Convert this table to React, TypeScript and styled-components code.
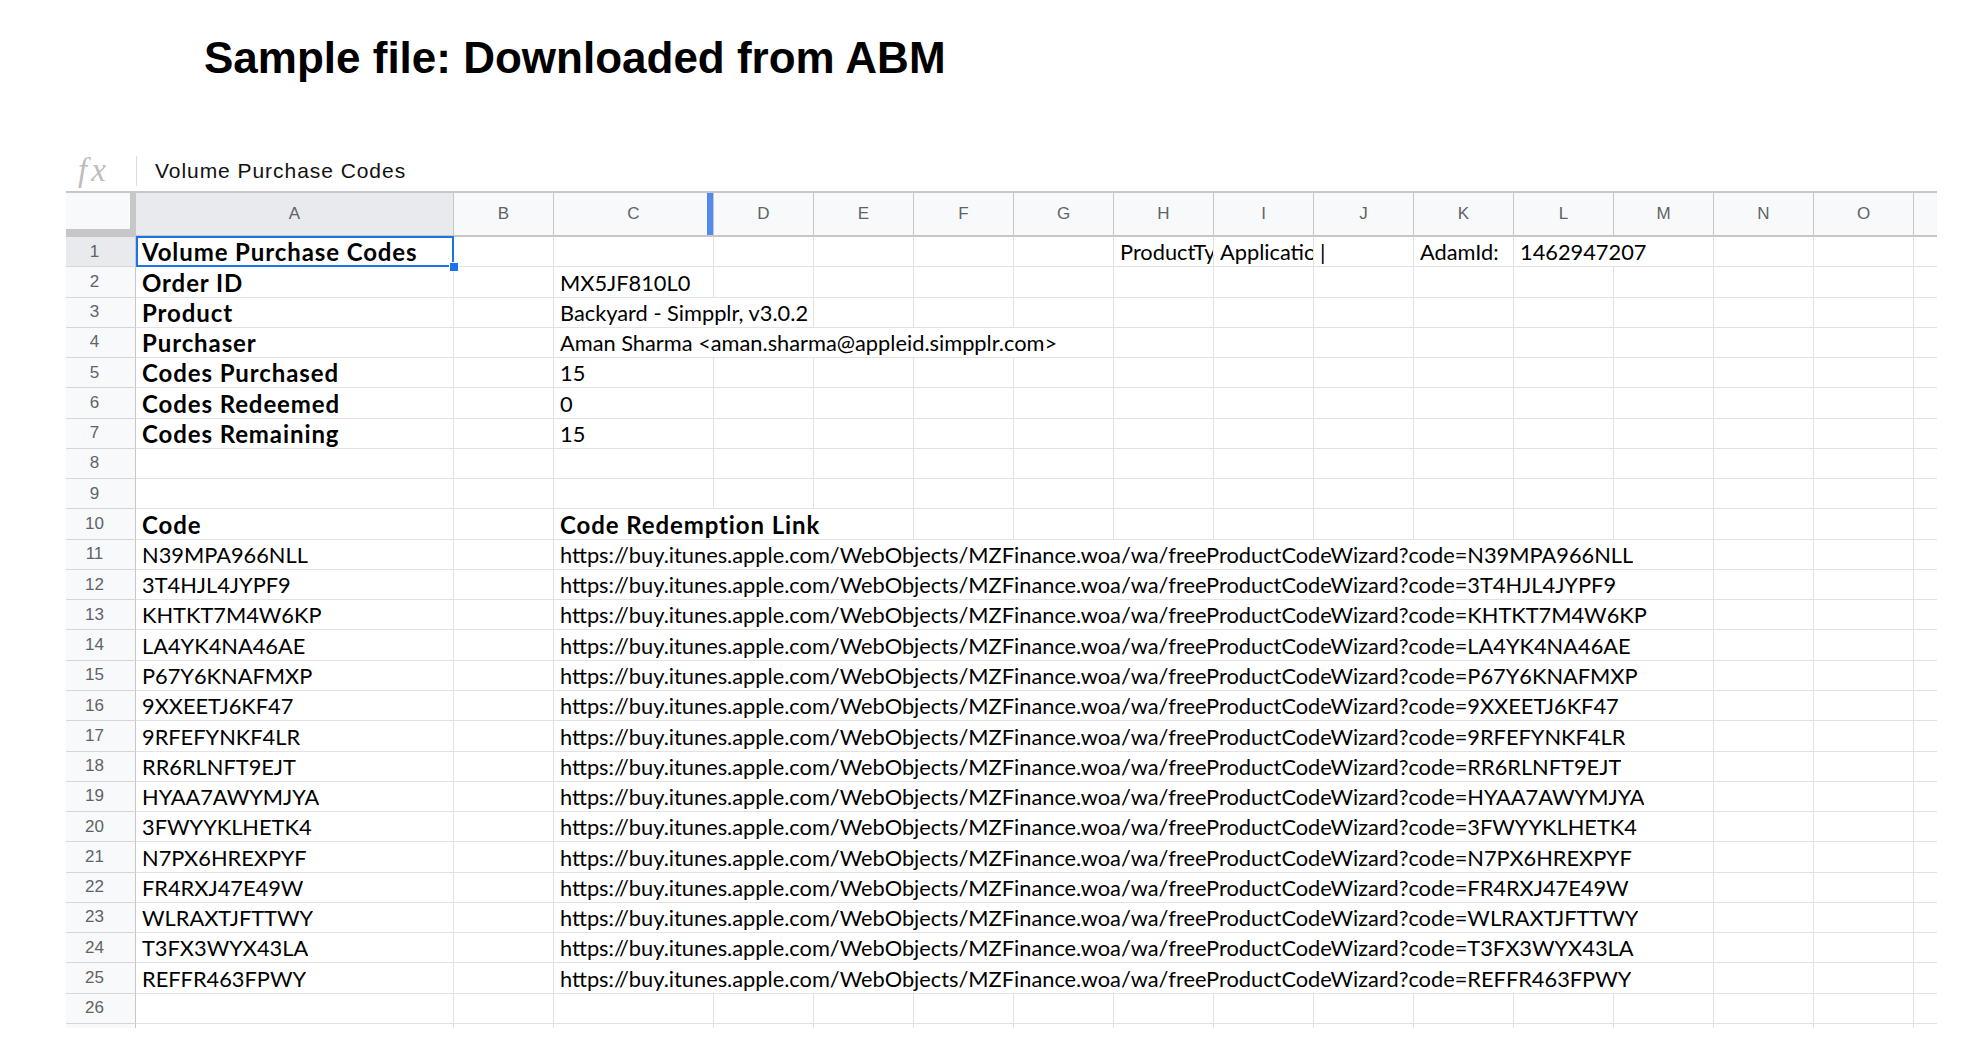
import React from 'react';
import styled, { createGlobalStyle, css } from 'styled-components';

const GlobalStyle = createGlobalStyle`
  *, *::before, *::after {
    box-sizing: border-box;
  }
  html, body {
    margin: 0;
    padding: 0;
    background: #fff;
  }
  body {
    font-family: 'Liberation Sans', Arial, sans-serif;
  }
`;

const COLUMNS = [
  { key: 'A', width: 318 },
  { key: 'B', width: 100 },
  { key: 'C', width: 160 },
  ...'DEFGHIJKLMNO'.split('').map((key) => ({ key, width: 100 })),
  { key: '', width: 24 },
];

const TEMPLATE = `70px ${COLUMNS.map((c) => `${c.width}px`).join(' ')}`;
const ROW_HEIGHT = 30.27;
const VISIBLE_ROWS = 26;
const URL = 'https://buy.itunes.apple.com/WebObjects/MZFinance.woa/wa/freeProductCodeWizard?code=';

const CODES = [
  'N39MPA966NLL',
  '3T4HJL4JYPF9',
  'KHTKT7M4W6KP',
  'LA4YK4NA46AE',
  'P67Y6KNAFMXP',
  '9XXEETJ6KF47',
  '9RFEFYNKF4LR',
  'RR6RLNFT9EJT',
  'HYAA7AWYMJYA',
  '3FWYYKLHETK4',
  'N7PX6HREXPYF',
  'FR4RXJ47E49W',
  'WLRAXTJFTTWY',
  'T3FX3WYX43LA',
  'REFFR463FPWY',
];

interface CellSpec {
  col: string;
  text: string;
  span?: number;
  bold?: boolean;
  active?: boolean;
}

const ROWS: CellSpec[][] = [
  [
    { col: 'A', text: 'Volume Purchase Codes', bold: true, active: true },
    { col: 'H', text: 'ProductType' },
    { col: 'I', text: 'Application' },
    { col: 'J', text: '|' },
    { col: 'K', text: 'AdamId:' },
    { col: 'L', text: '1462947207', span: 2 },
  ],
  [
    { col: 'A', text: 'Order ID', bold: true },
    { col: 'C', text: 'MX5JF810L0' },
  ],
  [
    { col: 'A', text: 'Product', bold: true },
    { col: 'C', text: 'Backyard - Simpplr, v3.0.2', span: 2 },
  ],
  [
    { col: 'A', text: 'Purchaser', bold: true },
    { col: 'C', text: 'Aman Sharma <aman.sharma@appleid.simpplr.com>', span: 5 },
  ],
  [
    { col: 'A', text: 'Codes Purchased', bold: true },
    { col: 'C', text: '15' },
  ],
  [
    { col: 'A', text: 'Codes Redeemed', bold: true },
    { col: 'C', text: '0' },
  ],
  [
    { col: 'A', text: 'Codes Remaining', bold: true },
    { col: 'C', text: '15' },
  ],
  [],
  [],
  [
    { col: 'A', text: 'Code', bold: true },
    { col: 'C', text: 'Code Redemption Link', bold: true, span: 3 },
  ],
  ...CODES.map((code) => [
    { col: 'A', text: code },
    { col: 'C', text: URL + code, span: 11 },
  ]),
  [],
  [],
];

const Page = styled.div`
  width: 1964px;
  height: 1050px;
  background: #fff;
  overflow: hidden;
`;

const Title = styled.h1`
  margin: 0;
  height: 150px;
  padding: 32px 0 0 204px;
  font: bold 44px/52px 'Liberation Sans', Arial, sans-serif;
  color: #000;
`;

const FormulaBar = styled.div`
  display: flex;
  align-items: center;
  height: 41px;
  margin-left: 66px;
  padding-left: 12px;
`;

const FxIcon = styled.span`
  width: 34px;
  font: italic 33px/1 'Liberation Serif', serif;
  letter-spacing: 4px;
  color: #bdbdbd;
`;

const Divider = styled.div`
  width: 1px;
  height: 30px;
  margin: 0 18px 0 24px;
  background: #dadce0;
`;

const FormulaText = styled.span`
  font: 21px 'Liberation Sans', Arial, sans-serif;
  letter-spacing: 0.95px;
  color: #111;
`;

const Sheet = styled.div`
  width: 1871px;
  height: 837px;
  margin-left: 66px;
  border-top: 2px solid #c7c7c7;
  overflow: hidden;
`;

const HeaderRow = styled.div`
  display: grid;
  grid-template-columns: ${TEMPLATE};
  height: 44px;
  border-bottom: 2px solid #c7c7c7;
`;

const Corner = styled.div`
  background: #f8f9fa;
  border-right: 6px solid #c7c7c7;
  border-bottom: 6px solid #c7c7c7;
`;

const ColHeader = styled.div<{ $active?: boolean; $marker?: boolean }>`
  position: relative;
  display: flex;
  align-items: center;
  justify-content: center;
  background: ${(p) => (p.$active ? '#e8eaed' : '#f8f9fa')};
  border-right: 1px solid #c7c7c7;
  color: #5f6368;
  font: 17px 'Liberation Sans', Arial, sans-serif;
  ${(p) =>
    p.$marker &&
    css`
      &::after {
        content: '';
        position: absolute;
        top: 0;
        right: 0;
        bottom: 0;
        width: 6px;
        background: #5289ec;
      }
    `}
`;

const Row = styled.div`
  display: grid;
  grid-template-columns: ${TEMPLATE};
  height: ${ROW_HEIGHT}px;
`;

const RowHeader = styled.div<{ $active?: boolean }>`
  display: flex;
  align-items: center;
  justify-content: center;
  padding-right: 12px;
  background: ${(p) => (p.$active ? '#e8eaed' : '#f8f9fa')};
  border-right: 1px solid #c7c7c7;
  border-bottom: 1px solid #d6d6d6;
  color: #5f6368;
  font: 17px 'Liberation Sans', Arial, sans-serif;
`;

const Cell = styled.div<{ $span: number; $active?: boolean }>`
  position: relative;
  grid-column: span ${(p) => p.$span};
  display: flex;
  align-items: flex-end;
  min-width: 0;
  padding-left: 6px;
  border-right: 1px solid #e2e2e2;
  border-bottom: 1px solid #e2e2e2;
  ${(p) =>
    p.$active &&
    css`
      &::before {
        content: '';
        position: absolute;
        top: -1px;
        left: 0;
        right: -1px;
        bottom: -1px;
        border: 2px solid #1a73e8;
      }
      &::after {
        content: '';
        position: absolute;
        right: -6px;
        bottom: -6px;
        width: 10px;
        height: 10px;
        background: #1a73e8;
        border: 1px solid #fff;
        z-index: 2;
      }
    `}
`;

const CellText = styled.span<{ $bold?: boolean }>`
  display: block;
  min-width: 0;
  overflow-x: clip;
  overflow-y: visible;
  white-space: nowrap;
  font-family: Lato, 'Open Sans', sans-serif;
  line-height: 28px;
  color: #000;
  ${(p) =>
    p.$bold
      ? css`
          font-weight: 700;
          font-size: 24px;
          letter-spacing: 0.9px;
        `
      : css`
          font-weight: 400;
          font-size: 21.8px;
        `}
`;

const renderCells = (specs: CellSpec[]) => {
  const cells: React.ReactNode[] = [];
  let i = 0;
  while (i < COLUMNS.length) {
    const col = COLUMNS[i].key;
    const spec = specs.find((s) => s.col === col && col !== '');
    const span = spec?.span ?? 1;
    cells.push(
      <Cell key={i} $span={span} $active={spec?.active}>
        {spec && <CellText $bold={spec.bold}>{spec.text}</CellText>}
      </Cell>
    );
    i += span;
  }
  return cells;
};

const App = () => {
  return (
    <Page>
      <GlobalStyle />
      <Title>Sample file: Downloaded from ABM</Title>
      <FormulaBar>
        <FxIcon>fx</FxIcon>
        <Divider />
        <FormulaText>Volume Purchase Codes</FormulaText>
      </FormulaBar>
      <Sheet>
        <HeaderRow>
          <Corner />
          {COLUMNS.map((c) => (
            <ColHeader key={c.key || 'last'} $active={c.key === 'A'} $marker={c.key === 'C'}>
              {c.key}
            </ColHeader>
          ))}
        </HeaderRow>
        {ROWS.map((specs, idx) => (
          <Row key={idx}>
            {/* the last row is only a sliver at the bottom edge */}
            <RowHeader $active={idx === 0}>{idx < VISIBLE_ROWS ? idx + 1 : ''}</RowHeader>
            {renderCells(specs)}
          </Row>
        ))}
      </Sheet>
    </Page>
  );
};

export default App;
